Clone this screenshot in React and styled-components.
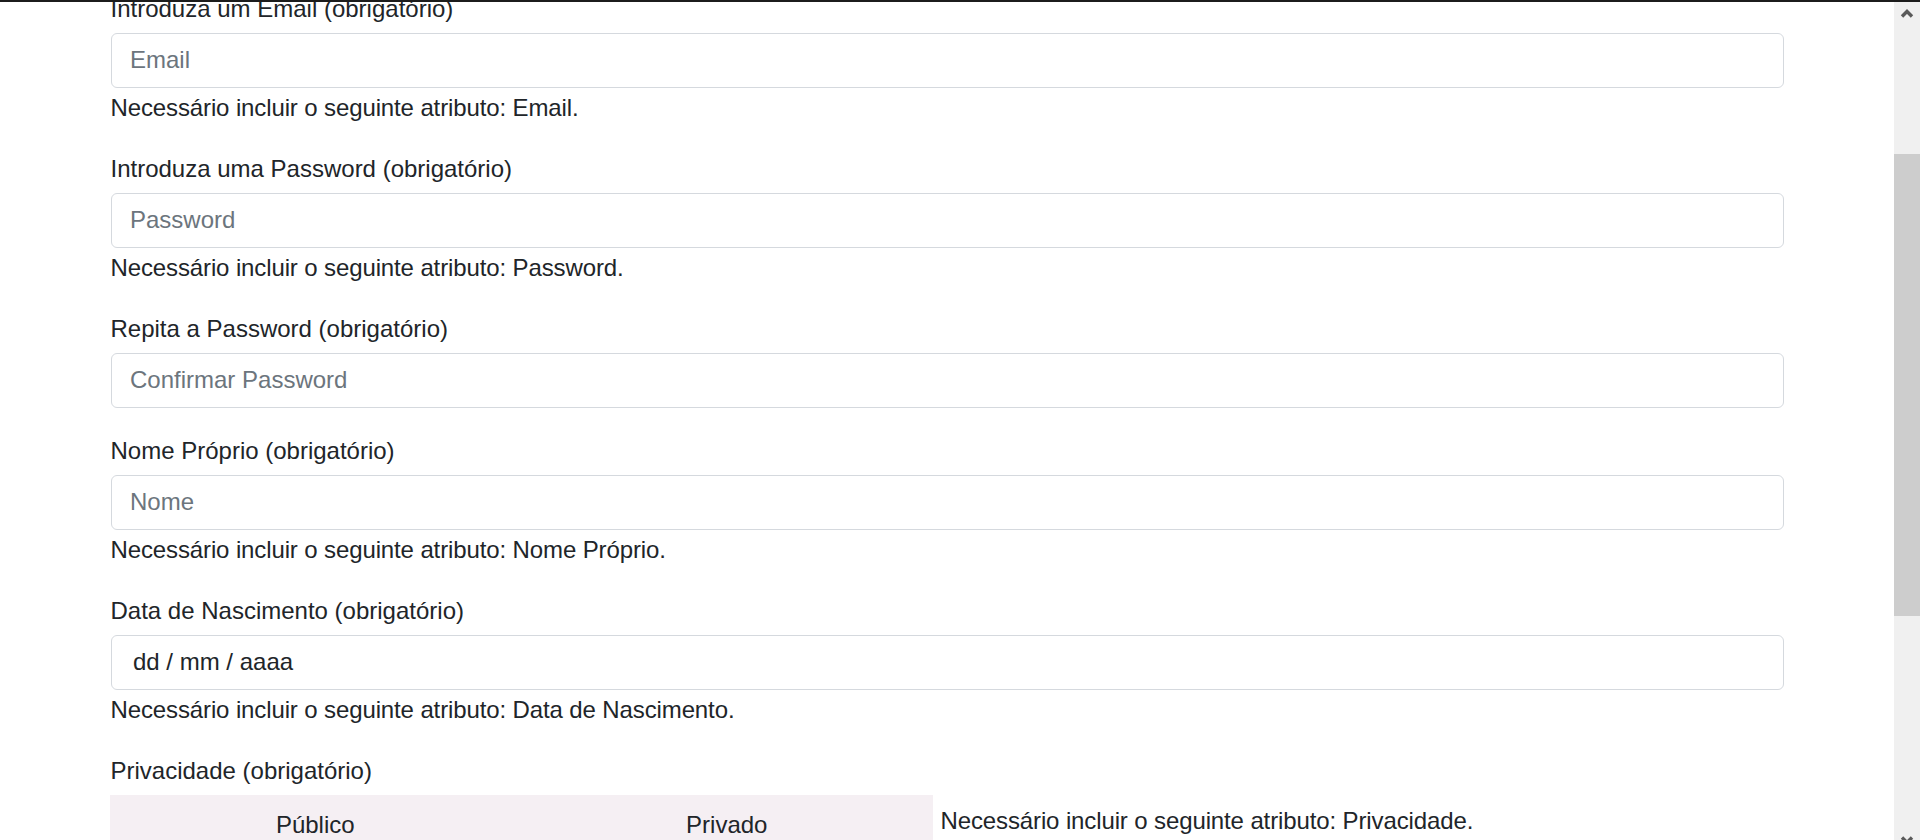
import styled, { createGlobalStyle } from "styled-components";

const GlobalStyle = createGlobalStyle`
  html, body {
    margin: 0;
    padding: 0;
    height: 100%;
    overflow: hidden;
  }
  body {
    font-family: "Liberation Sans", Arial, sans-serif;
    color: #212529;
    background: #fff;
  }
  #root {
    height: 100%;
  }
`;

const fields = [
  { label: "Introduza um Email (obrigatório)", placeholder: "Email", hint: "Email" },
  { label: "Introduza uma Password (obrigatório)", placeholder: "Password", hint: "Password" },
  { label: "Repita a Password (obrigatório)", placeholder: "Confirmar Password" },
  { label: "Nome Próprio (obrigatório)", placeholder: "Nome", hint: "Nome Próprio" },
  { label: "Data de Nascimento (obrigatório)", value: "dd / mm / aaaa", hint: "Data de Nascimento" },
];

function Chevron({ down }) {
  return (
    <svg width="14" height="10" viewBox="0 0 14 10">
      <path
        d={down ? "M2 2.5 L7 7.5 L12 2.5" : "M2 7.5 L7 2.5 L12 7.5"}
        fill="none"
        stroke="#5a5a5a"
        strokeWidth="3.4"
      />
    </svg>
  );
}

export default function App() {
  return (
    <Window>
      <GlobalStyle />
      <TopEdge />
      <Viewport>
        <Page>
          <Form onSubmit={(e) => e.preventDefault()}>
            {fields.map((f) => (
              <Group key={f.label}>
                <Label>{f.label}</Label>
                {f.value ? (
                  <Input $date type="text" defaultValue={f.value} readOnly />
                ) : (
                  <Input type="text" placeholder={f.placeholder} />
                )}
                {f.hint && (
                  <Hint>Necessário incluir o seguinte atributo: {f.hint}.</Hint>
                )}
              </Group>
            ))}
            <Group>
              <Label>Privacidade (obrigatório)</Label>
              <ChoiceRow>
                <Choices>
                  <Choice>Público</Choice>
                  <Choice>Privado</Choice>
                </Choices>
                <Hint $top={8}>Necessário incluir o seguinte atributo: Privacidade.</Hint>
              </ChoiceRow>
            </Group>
          </Form>
        </Page>
        <Scrollbar>
          <ArrowButton $h={24}>
            <Chevron />
          </ArrowButton>
          <Thumb />
          <Track />
          <ArrowButton $h={14} $end>
            <DownGlyph>
              <Chevron down />
            </DownGlyph>
          </ArrowButton>
        </Scrollbar>
      </Viewport>
    </Window>
  );
}

const Window = styled.div`
  height: 100vh;
  display: flex;
  flex-direction: column;
`;

const TopEdge = styled.div`
  flex: none;
  height: 2px;
  background: #1c1c1c;
`;

const Viewport = styled.div`
  flex: 1;
  min-height: 0;
  display: flex;
`;

const Page = styled.main`
  flex: 1;
  overflow: hidden;
  background: #fff;
`;

const Form = styled.form`
  width: 1673px;
  margin: -11.3px auto 0;
`;

const Group = styled.div`
  margin-bottom: 24.5px;
`;

const Label = styled.label`
  display: block;
  font-size: 24px;
  line-height: 36px;
  margin-bottom: 6px;
`;

const Input = styled.input`
  display: block;
  box-sizing: border-box;
  width: 100%;
  height: 55.5px;
  padding: 0 ${(p) => (p.$date ? "21.5px" : "18.5px")};
  border: 1px solid #d5d9de;
  border-radius: 6px;
  font-family: inherit;
  font-size: 24px;
  color: #212529;
  background: #fff;
  outline: none;

  &::placeholder {
    color: #6c757d;
  }
`;

const Hint = styled.div`
  font-size: 24px;
  line-height: 36px;
  letter-spacing: -0.12px;
  margin-top: ${(p) => p.$top ?? 2}px;
`;

const ChoiceRow = styled.div`
  display: flex;
  align-items: flex-start;
  gap: 8px;
  margin-top: 2px;
`;

const Choices = styled.div`
  flex: none;
  width: 823px;
  margin-left: -1px;
  display: grid;
  grid-template-columns: 1fr 1fr;
  background: #f5eff3;
`;

const Choice = styled.div`
  text-align: center;
  font-size: 24px;
  line-height: 36px;
  padding: 12px 0;
`;

const Scrollbar = styled.div`
  flex: none;
  width: 26px;
  background: #f0f0f0;
  display: flex;
  flex-direction: column;
  overflow: hidden;
`;

const ArrowButton = styled.div`
  flex: none;
  height: ${(p) => p.$h}px;
  display: flex;
  justify-content: center;
  align-items: ${(p) => (p.$end ? "flex-end" : "center")};
`;

const DownGlyph = styled.div`
  display: flex;
  margin-bottom: -5px;
`;

const Thumb = styled.div`
  flex: none;
  margin-top: 128px;
  height: 462px;
  background: #cdcdcd;
`;

const Track = styled.div`
  flex: 1;
`;
